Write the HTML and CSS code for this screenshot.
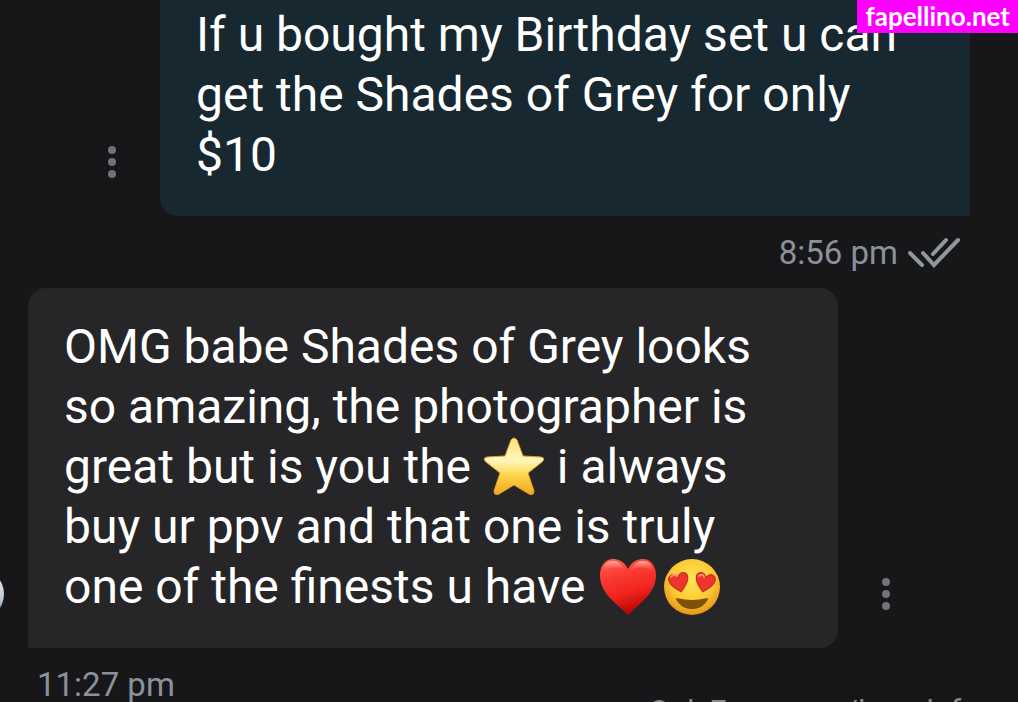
FILE: index.html
```
<!DOCTYPE html>
<html lang="en">
<head>
    <meta charset="UTF-8">
    <meta name="viewport" content="width=device-width, initial-scale=1.0">
    <title>Messages</title>
    <link rel="stylesheet" href="styles.css">
</head>
<body>
    <main class="chat">
        <div class="message sent">
            <button class="menu-button" type="button" aria-label="Message options">
                <svg width="8" height="32" viewBox="0 0 8 32"><circle cx="4" cy="4" r="4"/><circle cx="4" cy="16" r="4"/><circle cx="4" cy="28" r="4"/></svg>
            </button>
            <p class="bubble">If u bought my Birthday set u can get the Shades of Grey for only $10</p>
        </div>
        <div class="meta meta-sent">
            <time>8:56 pm</time>
            <svg class="ticks" width="54" height="32" viewBox="0 0 54 32">
                <path d="M2 17 14 29M15 17 26 29 50 4M25 18 38 4"/>
            </svg>
        </div>

        <div class="message received">
            <div class="avatar"></div>
            <p class="bubble">OMG babe Shades of Grey looks so amazing, the photographer is great but is you the
                <svg class="emoji" viewBox="0 0 60 60" role="img" aria-label="star">
                    <defs>
                        <linearGradient id="star-fill" x1="0" y1="0" x2="0" y2="1">
                            <stop offset="0" stop-color="#ffe27a"/>
                            <stop offset="0.4" stop-color="#fff6bd"/>
                            <stop offset="0.65" stop-color="#fbd84d"/>
                            <stop offset="1" stop-color="#f3a51c"/>
                        </linearGradient>
                    </defs>
                    <path d="M27 3Q30-1 33 3L39 19 57 20Q62 21 58 25L44 36 50 54Q50 59 45 57L30 48 15 57Q10 59 10 54L16 36 2 25Q-2 21 3 20L21 19Z" fill="url(#star-fill)" stroke="#dfa02f" stroke-width="1"/>
                </svg>
                i always buy ur ppv and that one is truly one of the finests u have
                <span class="emoji-pair"><svg class="emoji" viewBox="0 0 60 60" role="img" aria-label="red heart">
                    <defs>
                        <linearGradient id="heart-fill" x1="0" y1="0" x2="0.3" y2="1">
                            <stop offset="0" stop-color="#ff6156"/>
                            <stop offset="0.35" stop-color="#fb3c34"/>
                            <stop offset="0.7" stop-color="#ef241d"/>
                            <stop offset="1" stop-color="#bd0906"/>
                        </linearGradient>
                        <linearGradient id="heart-shine" x1="0" y1="0" x2="0" y2="1">
                            <stop offset="0" stop-color="#ffb4ac"/>
                            <stop offset="1" stop-color="#ff5148" stop-opacity="0"/>
                        </linearGradient>
                    </defs>
                    <path d="M30 12C26 4 20 2 15 2 7 2 2 9 2 18 2 36 17 45 28 56Q30 59 32 56C43 45 58 36 58 18 58 9 53 2 45 2 40 2 34 4 30 12Z" fill="url(#heart-fill)"/>
                    <path d="M5 15C5 7 10 4 15 4S24 7 27 13C20 9 11 10 5 15ZM33 13C36 7 40 4 45 4S55 7 55 15C49 10 40 9 33 13Z" fill="url(#heart-shine)"/>
                </svg><svg class="emoji" viewBox="0 0 60 60" role="img" aria-label="smiling face with heart eyes">
                    <defs>
                        <radialGradient id="face-fill" cx="0.5" cy="0.38" r="0.62">
                            <stop offset="0" stop-color="#ffe653"/>
                            <stop offset="0.6" stop-color="#fcca36"/>
                            <stop offset="1" stop-color="#e69516"/>
                        </radialGradient>
                        <path id="heart-eye" d="M0-5C-2-8-5-9-7-8-11-6-10-1-7 3-4 7-1 9 0 10 1 9 4 7 7 3 10-1 11-6 7-8 5-9 2-8 0-5Z"/>
                    </defs>
                    <circle cx="30" cy="30" r="28" fill="url(#face-fill)"/>
                    <use href="#heart-eye" transform="translate(17 25) rotate(-12)" fill="#ee352c" stroke="#c22b1b" stroke-width="1"/>
                    <use href="#heart-eye" transform="translate(43 25) rotate(12)" fill="#ee352c" stroke="#c22b1b" stroke-width="1"/>
                    <path d="M9 20Q12 16 15 19M37 19Q41 16 42 20" fill="none" stroke="#ff8a7d" stroke-width="2" stroke-linecap="round"/>
                    <path d="M15 41Q30 45 45 41Q47 41 45 44C41 50 36 52 30 52S19 50 15 44Q13 41 15 41Z" fill="#805008"/>
                </svg></span></p>
            <button class="menu-button" type="button" aria-label="Message options">
                <svg width="8" height="32" viewBox="0 0 8 32"><circle cx="4" cy="4" r="4"/><circle cx="4" cy="16" r="4"/><circle cx="4" cy="28" r="4"/></svg>
            </button>
        </div>
        <div class="meta meta-received">
            <time>11:27 pm</time>
        </div>
    </main>

    <div class="site-tag">fapellino.net</div>
    <div class="profile-mark">OnlyFans.com/lanadef</div>
</body>
</html>
```

FILE: styles.css
```
* {
    box-sizing: border-box;
}

body {
    margin: 0;
    position: relative;
    height: 100vh;
    overflow: hidden;
    background-color: #171719;
    color: #fff;
    font-family: Roboto, "Liberation Sans", sans-serif;
}

.chat {
    display: flex;
    flex-direction: column;
}

/* Message rows */
.message {
    display: flex;
    align-items: flex-end;
    gap: 24px;
}

.sent {
    padding: 0 48px 0 88px;
}

.received {
    padding-right: 108px;
}

.bubble {
    flex: 1;
    margin: 0;
    font-size: 48px;
    line-height: 60px;
}

.sent .bubble {
    padding: 5px 36px 31px;
    background-color: #172830;
    border-radius: 0 0 0 18px;
}

.received .bubble {
    padding: 29px 36px 31px;
    background-color: #262628;
    border-radius: 18px 18px 18px 0;
}

.menu-button {
    display: flex;
    align-items: center;
    justify-content: center;
    width: 48px;
    height: 48px;
    margin-bottom: 30px;
    padding: 0;
    border: none;
    background: none;
    cursor: pointer;
}

.menu-button svg {
    fill: #727376;
}

/* Mostly off the left edge */
.avatar {
    width: 52px;
    height: 52px;
    margin: 0 0 28px -48px;
    border-radius: 50%;
    background: linear-gradient(#eef1f5, #bcc7d8 60%, #77685c);
}

.emoji {
    width: 60px;
    height: 60px;
    margin: 0 1px;
    vertical-align: -14px;
}

.emoji-pair {
    display: inline-flex;
    gap: 2px;
    vertical-align: -14px;
}

/* Time and read status */
.meta {
    display: flex;
    align-items: center;
    height: 72px;
    color: #8a919c;
    font-size: 33px;
}

.meta-sent {
    justify-content: flex-end;
    gap: 10px;
    padding-right: 56px;
}

.meta-received {
    padding-left: 37px;
}

.ticks {
    fill: none;
    stroke: #9197a1;
    stroke-width: 4;
    stroke-linecap: round;
}

/* Labels over the page */
.site-tag {
    position: absolute;
    top: 0;
    right: 0;
    padding: 0 8px;
    background-color: #ff00fe;
    font-family: Lato, sans-serif;
    font-size: 26px;
    font-weight: bold;
    line-height: 33px;
}

.profile-mark {
    position: absolute;
    top: 694px;
    right: 57px;
    color: #8c8781;
    font-size: 31px;
    line-height: 36px;
}
```
